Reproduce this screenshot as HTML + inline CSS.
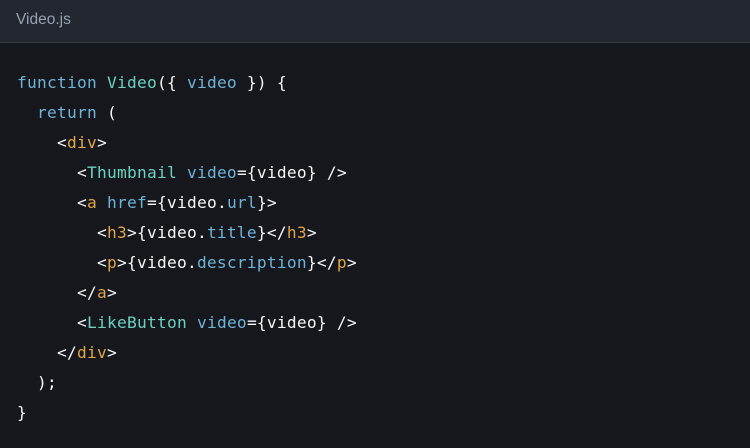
<html><head><style>
body{margin:0;width:750px;height:448px;background:#16181d;overflow:hidden}
.h{height:43px;background:#23272f;border-bottom:1px solid #343a46;box-sizing:border-box;color:#99a1b3;font:15.5px "Liberation Sans",sans-serif;padding-left:16px;line-height:40px}
pre{margin:0;padding:25px 0 0 17px;font:16.2px/30px "DejaVu Sans Mono",monospace;letter-spacing:0.25px;color:#f6f7f9}
.k{color:#6fb3d9}.c{color:#6bd2bf}.t{color:#e2a54a}
</style></head><body>
<div class="h">Video.js</div>
<pre><span class="k">function</span> <span class="c">Video</span>({ <span class="k">video</span> }) {
  <span class="k">return</span> (
    &lt;<span class="t">div</span>&gt;
      &lt;<span class="c">Thumbnail</span> <span class="k">video</span>={video} /&gt;
      &lt;<span class="t">a</span> <span class="k">href</span>={video.<span class="k">url</span>}&gt;
        &lt;<span class="t">h3</span>&gt;{video.<span class="k">title</span>}&lt;/<span class="t">h3</span>&gt;
        &lt;<span class="t">p</span>&gt;{video.<span class="k">description</span>}&lt;/<span class="t">p</span>&gt;
      &lt;/<span class="t">a</span>&gt;
      &lt;<span class="c">LikeButton</span> <span class="k">video</span>={video} /&gt;
    &lt;/<span class="t">div</span>&gt;
  );
}</pre>
</body></html>
